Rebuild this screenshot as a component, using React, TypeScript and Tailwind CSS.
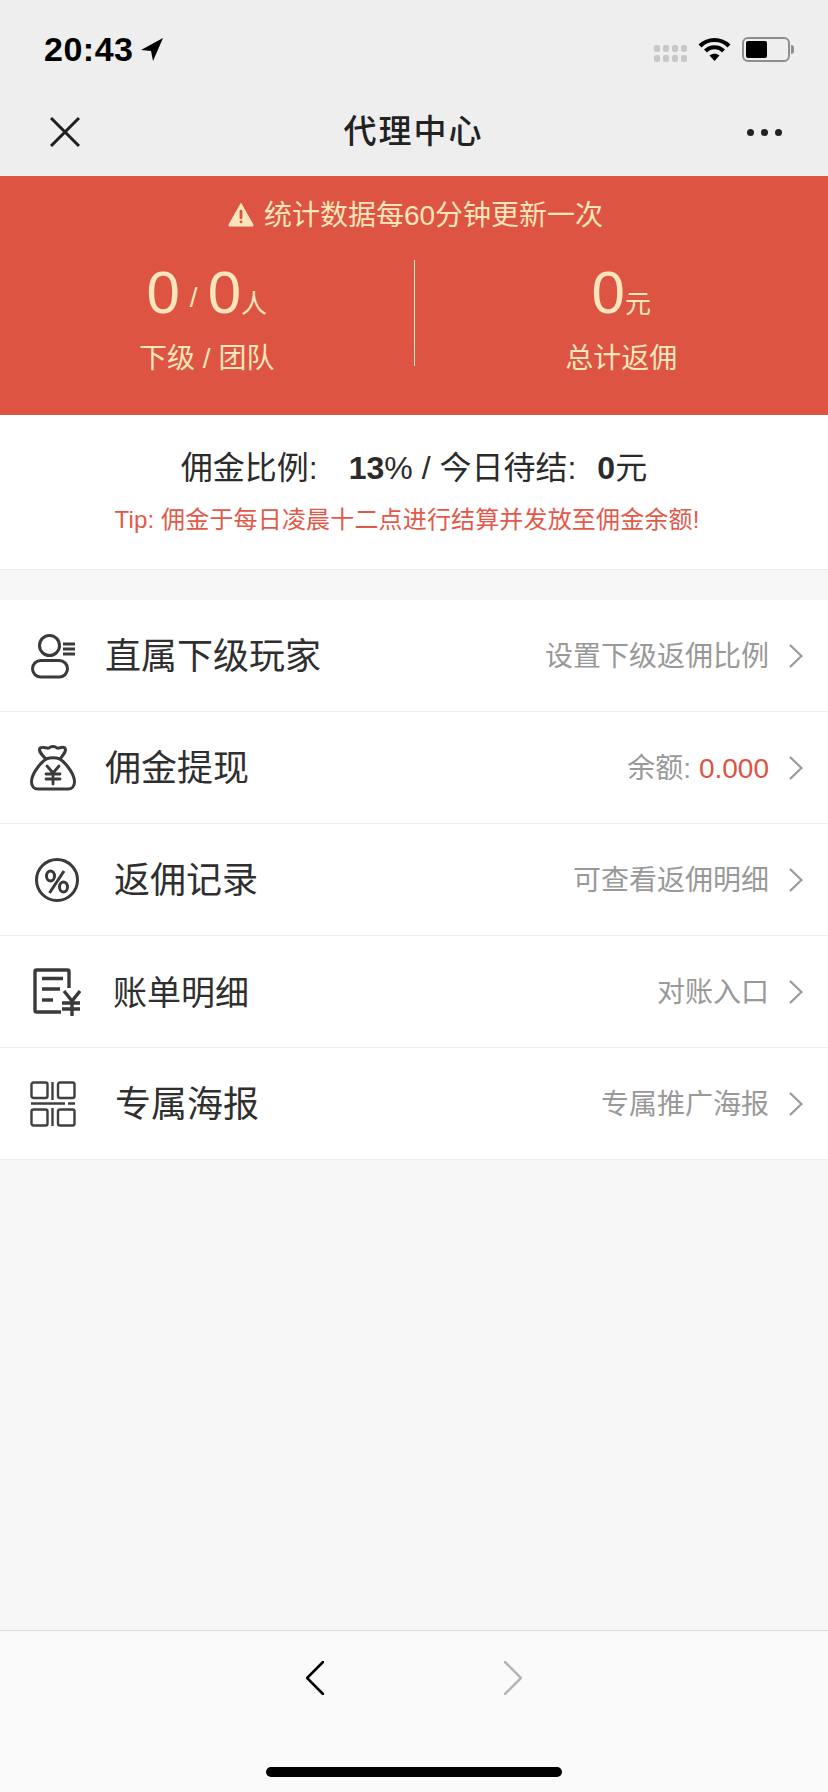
import type { ReactNode } from "react";

const cream = "text-[#fbe5ba]";

function PlayerIcon() {
  return (
    <svg width="46" height="46" viewBox="0 0 46 46" fill="none" stroke="#3a3a3a" strokeWidth="3">
      <circle cx="19.500" cy="12.500" r="10" />
      <rect x="2.500" y="27.500" width="35" height="16.500" rx="8.250" />
      <path d="M33 11h12M33 16h12M33 21h12" />
    </svg>
  );
}

function BagIcon() {
  return (
    <svg width="46" height="46" viewBox="0 0 46 46" fill="none" stroke="#3a3a3a" strokeWidth="3" strokeLinejoin="round" strokeLinecap="round">
      <path d="M16 14C12 10 8 6 10 3c3-2 7 1 9 0 2-2 6-2 8 0 2 1 5-2 8 0 2 3-2 7-5 11" />
      <path d="M16 14C8 20 1.500 30 1.500 37c0 4 2.500 7 6.500 7h30c4 0 6.500-3 6.500-7 0-7-6.500-17-14.500-23-4.500-1.500-9.500-1.500-14 0z" />
      <path d="M17 21l6 7 6-7M16 29h14M16 34h14M23 28v11" strokeWidth="2.800" />
    </svg>
  );
}

function PercentIcon() {
  return (
    <svg width="46" height="46" viewBox="0 0 46 46" fill="none" stroke="#3a3a3a" strokeWidth="3">
      <circle cx="23" cy="23" r="20.500" />
      <ellipse cx="16.500" cy="19" rx="4" ry="5" />
      <ellipse cx="29.500" cy="30" rx="4" ry="5" />
      <path d="M30 14L15.500 36" />
    </svg>
  );
}

function BillIcon() {
  return (
    <svg width="48" height="48" viewBox="0 0 48 48" fill="none" stroke="#3a3a3a" strokeWidth="3.400">
      <path d="M36 20V3.500a1.500 1.500 0 0 0-1.500-1.500H3.500A1.500 1.500 0 0 0 2 3.500v39A1.500 1.500 0 0 0 3.500 44H28" />
      <path d="M9 10.500h21M9 21h18M9 32h11" />
      <path d="M31 23l8 10 8-10M29 35h18M29 41h18M39 33v15" />
    </svg>
  );
}

function PosterIcon() {
  return (
    <svg width="46" height="46" viewBox="0 0 46 46" fill="none" stroke="#3f3f3f" strokeWidth="2.400">
      <rect x="1.500" y="1.500" width="16" height="15.500" rx="2" />
      <rect x="28" y="1.500" width="16.500" height="15.500" rx="2" />
      <rect x="1.500" y="28.500" width="16" height="16" rx="2" />
      <rect x="28" y="28.500" width="16.500" height="16" rx="2" />
      <path d="M22.500 1v18M22.500 27v18M1 22.500h34M38 22.500h7" />
    </svg>
  );
}

function MenuRow({
  icon,
  iconClass,
  title,
  titleClass = "text-[36px]",
  hint,
}: {
  icon: ReactNode;
  iconClass: string;
  title: string;
  titleClass?: string;
  hint: ReactNode;
}) {
  return (
    <div className="flex h-[112px] items-center border-b border-[#efefef] pr-[25px]">
      <div className={iconClass}>{icon}</div>
      <span className={`flex-1 pt-[3px] text-[#2f2f2f] ${titleClass}`}>{title}</span>
      <span className="pt-[2px] text-[28px] text-[#999999]">{hint}</span>
      <svg className="ml-[20px]" width="14" height="24" viewBox="0 0 14 24" fill="none" stroke="#999999" strokeWidth="2.200">
        <path d="M1 1l11.500 11L1 23" />
      </svg>
    </div>
  );
}

export default function App() {
  return (
    <div
      className="flex h-[1792px] w-[828px] flex-col overflow-hidden bg-[#f7f7f7]"
      style={{ fontFamily: '"Liberation Sans", "Noto Sans CJK SC", sans-serif' }}
    >
      <header className="h-[176px] bg-[#eeeeee]">
        {/* status bar */}
        <div className="flex h-[88px] items-start justify-between pr-[34px] pl-[44px] pt-[30px]">
          <div className="flex items-center gap-[7px]">
            <span className="text-[34px] leading-[38px] font-semibold tracking-[0.5px] text-black">20:43</span>
            <svg width="24" height="25" viewBox="0 0 24 25">
              <path d="M23 1L1 13l10 1 2 10z" fill="#000" />
            </svg>
          </div>
          <div className="flex items-start pt-[7px]">
            <div className="mt-[8px] grid grid-cols-4 gap-x-[3px] gap-y-[3px]">
              {Array.from({ length: 8 }).map((_, i) => (
                <span key={i} className="h-[7px] w-[6px] rounded-[2px] bg-[#c8c8c8]" />
              ))}
            </div>
            <svg className="ml-[11px]" width="33" height="24" viewBox="0 0 33 24" fill="none" stroke="#000" strokeWidth="4.200">
              <path d="M2 9c8-8 21-8 29 0" />
              <path d="M7.500 14c5-5 13-5 18 0" />
              <path d="M11.500 18.500c3-2.500 7-2.500 10 0l-5 5.500z" fill="#000" stroke="none" />
            </svg>
            <div className="ml-[11px] flex items-center">
              <div className="h-[25px] w-[48px] rounded-[6px] border-2 border-[#8e8e8e] p-[2px]">
                <div className="h-full w-[21px] rounded-[2px] bg-black" />
              </div>
              <div className="ml-[1px] h-[9px] w-[3px] rounded-r-[3px] bg-[#8e8e8e]" />
            </div>
          </div>
        </div>
        {/* nav bar */}
        <div className="flex h-[88px] items-center justify-between pr-[46px] pl-[50px]">
          <svg width="30" height="30" viewBox="0 0 30 30" stroke="#1f1f1f" strokeWidth="3">
            <path d="M1 1l28 28M29 1L1 29" />
          </svg>
          <span className="text-[33px] font-medium tracking-[2px] text-[#222222]">代理中心</span>
          <div className="flex gap-[7px]">
            <span className="h-[7px] w-[7px] rounded-full bg-[#222222]" />
            <span className="h-[7px] w-[7px] rounded-full bg-[#222222]" />
            <span className="h-[7px] w-[7px] rounded-full bg-[#222222]" />
          </div>
        </div>
      </header>

      <section className={`h-[239px] bg-[#dd5443] pt-[20px] ${cream}`}>
        <div className="flex h-[40px] items-center justify-center gap-[10px] pl-[3px] text-[28px]">
          <svg className="-translate-y-[2px]" width="26" height="25" viewBox="0 0 28 26">
            <path d="M14 1L1 24a1 1 0 0 0 1 1.500h24a1 1 0 0 0 1-1.500z" fill="#fbe5ba" stroke="#fbe5ba" strokeLinejoin="round" />
            <rect x="12.500" y="8" width="3" height="10" rx="1.500" fill="#dd5443" />
            <rect x="12.500" y="19.500" width="3" height="3" rx="1.500" fill="#dd5443" />
          </svg>
          <span>统计数据每60分钟更新一次</span>
        </div>
        <div className="mt-[23px] flex items-start">
          <div className="flex flex-1 flex-col items-center">
            <div className="flex h-[66px] items-baseline pt-[1px]">
              <span className="text-[60px] leading-[66px]">0</span>
              <span className="mx-[10px] -translate-y-[6px] text-[28px]">/</span>
              <span className="text-[60px] leading-[66px]">0</span>
              <span className="text-[26px]">人</span>
            </div>
            <span className="mt-[14px] text-[28px] leading-[40px]">下级 / 团队</span>
          </div>
          <div className="mt-[1px] h-[106px] w-px bg-[#fbe5ba]" />
          <div className="flex flex-1 flex-col items-center">
            <div className="flex h-[66px] items-baseline pt-[1px]">
              <span className="text-[60px] leading-[66px]">0</span>
              <span className="text-[26px]">元</span>
            </div>
            <span className="mt-[14px] text-[28px] leading-[40px]">总计返佣</span>
          </div>
        </div>
      </section>

      <section className="flex h-[155px] flex-col items-center border-b border-[#ececec] bg-white pt-[30px]">
        <p className="text-[32px] leading-[46px] text-[#2b2b2b]">
          佣金比例:<span className="ml-[31px] font-bold">13</span>% / 今日待结:<span className="ml-[21px] font-bold">0</span>元
        </p>
        <p className="mt-[9px] pr-[14px] text-[24px] leading-[40px] tracking-[0.16px] text-[#e2594a]">
          Tip: 佣金于每日凌晨十二点进行结算并发放至佣金余额!
        </p>
      </section>

      <main className="mt-[30px] bg-white">
        <MenuRow icon={<PlayerIcon />} iconClass="ml-[30px] mr-[29px]" title="直属下级玩家" hint="设置下级返佣比例" />
        <MenuRow
          icon={<BagIcon />}
          iconClass="ml-[30px] mr-[29px]"
          title="佣金提现"
          hint={
            <>
              余额: <span className="text-[#dd5443]">0.000</span>
            </>
          }
        />
        <MenuRow icon={<PercentIcon />} iconClass="ml-[34px] mr-[34px]" title="返佣记录" hint="可查看返佣明细" />
        <MenuRow icon={<BillIcon />} iconClass="ml-[33px] mr-[32px]" title="账单明细" titleClass="text-[34px]" hint="对账入口" />
        <MenuRow icon={<PosterIcon />} iconClass="ml-[30px] mr-[39px]" title="专属海报" hint="专属推广海报" />
      </main>

      <div className="flex-1" />

      <footer className="flex h-[162px] flex-col items-center border-t border-[#dcdcdc] bg-[#fafafa]">
        <div className="mt-[30px] flex gap-[180px]">
          <svg width="18" height="34" viewBox="0 0 18 34" fill="none" stroke="#000" strokeWidth="2.600" strokeLinecap="round">
            <path d="M17 1L1 17l16 16" />
          </svg>
          <svg width="18" height="34" viewBox="0 0 18 34" fill="none" stroke="#b5b5b5" strokeWidth="2.600" strokeLinecap="round">
            <path d="M1 1l16 16L1 33" />
          </svg>
        </div>
        <div className="mt-[72px] h-[10px] w-[296px] rounded-full bg-black" />
      </footer>
    </div>
  );
}
